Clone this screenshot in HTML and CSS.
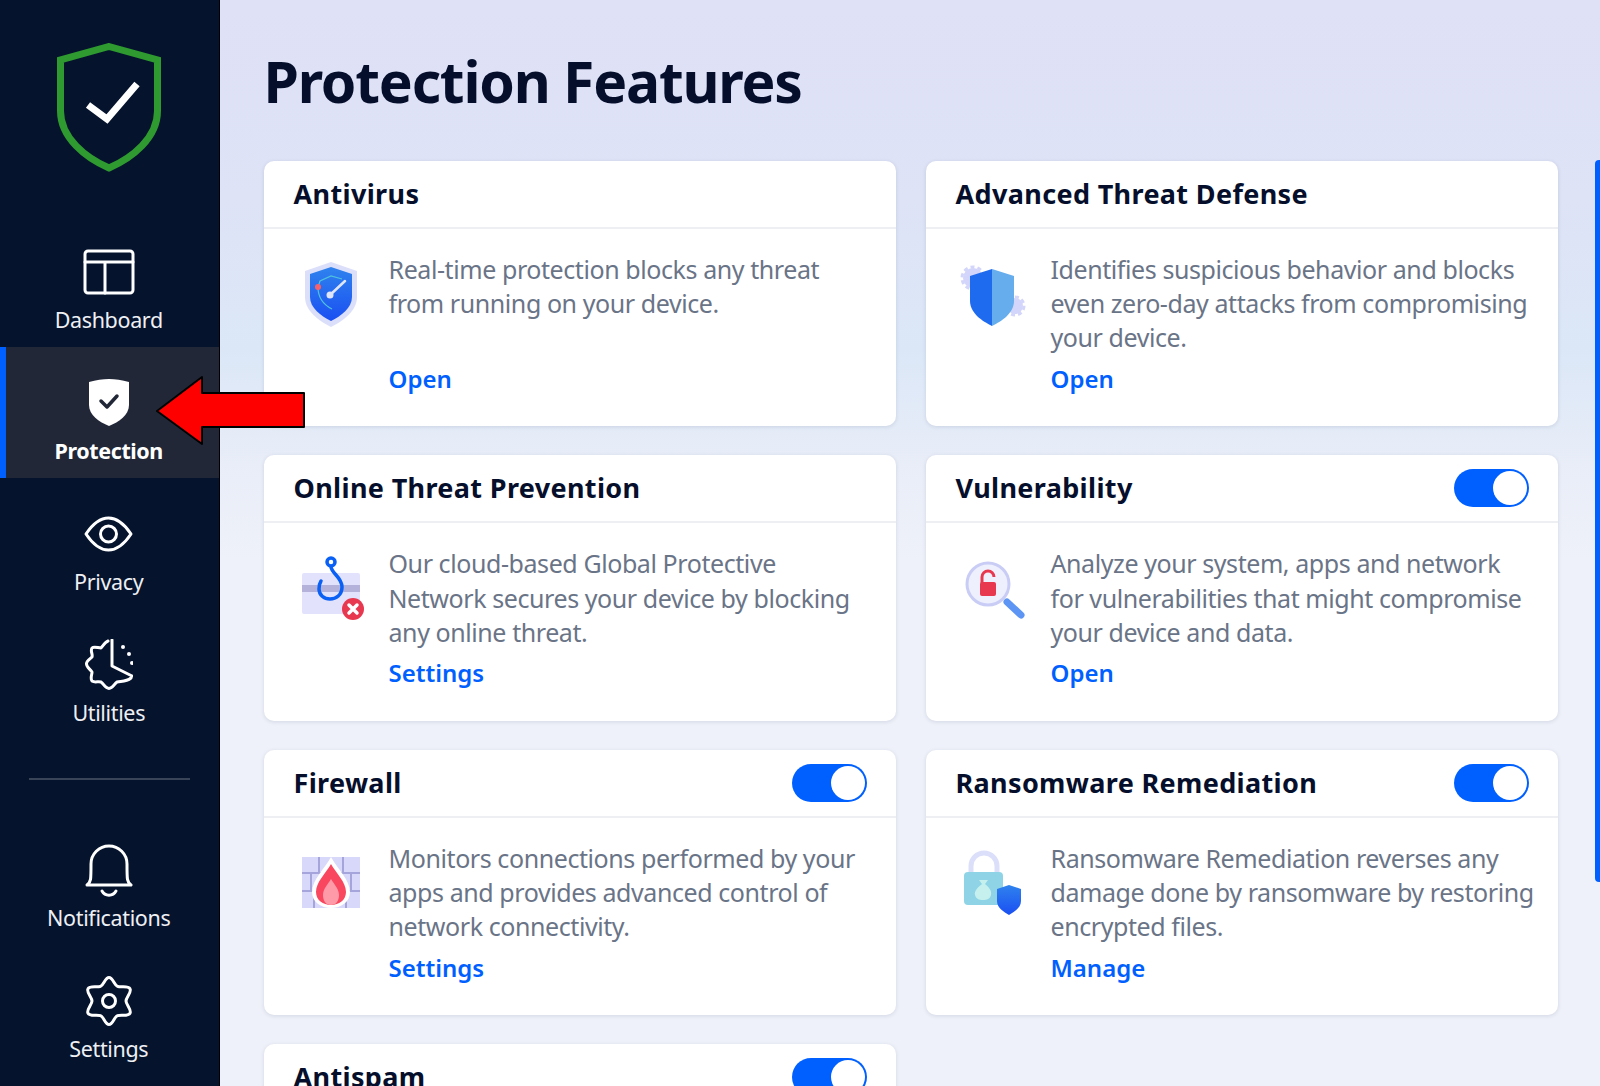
FILE: index.html
```html
<!DOCTYPE html>
<html lang="en">
<head>
<meta charset="utf-8">
<title>Protection Features</title>
<link rel="stylesheet" href="styles.css">
</head>
<body>
<div class="app">
  <aside class="sidebar">
    <div class="logo">
      <svg class="logo-icon" viewBox="0 0 104 129"><path class="logo-shield" d="M52 3.5 100.5 17V68C100.5 95 75 115 52 125 29 115 3.500 95 3.500 68V17Z"/><path class="logo-check" d="M31 62 50 76 80 41"/></svg>
    </div>
    <nav class="nav">
      <a class="nav-item"><span class="nav-icon"><svg class="i-dash" viewBox="0 0 52 46"><rect x="2" y="2" width="48" height="42" rx="3"/><path d="M2 13H50M22 13V44"/></svg></span><span class="nav-label">Dashboard</span></a>
      <a class="nav-item active"><span class="nav-icon"><svg class="i-prot" viewBox="0 0 40 47"><path class="solid" d="M20 0C26 0 33 1 40 3V26C40 36 30 43 20 47 10 43 0 36 0 26V3C7 1 14 0 20 0Z"/><path class="tick" d="M12 22 18 28 28 17"/></svg></span><span class="nav-label">Protection</span></a>
      <a class="nav-item"><span class="nav-icon"><svg class="i-eye" viewBox="0 0 49 36"><path d="M2 18C10 6 18 2 24.500 2S39 6 47 18C39 30 31 34 24.500 34S10 30 2 18Z"/><circle cx="24.500" cy="18" r="8"/></svg></span><span class="nav-label">Privacy</span></a>
      <a class="nav-item"><span class="nav-icon"><svg class="i-util" viewBox="0 0 48 51"><path d="M23 2C20 3 18 7 16 9 13 9 9 7 7 9 5 12 8 15 7 18 5 20 1 22 1.500 25 1.500 28 5 30 7 33 7 36 5 39 7 42 10 44 13 42 16 43 19 45 20 49.500 24 49.500 28 49.500 29 45 32 43 36 42 41 43 46 39"/><path d="M27 1V27L47 37"/><circle class="dot" cx="38" cy="8" r="2"/><circle class="dot" cx="44" cy="15" r="2"/><circle class="dot" cx="47" cy="24" r="2"/></svg></span><span class="nav-label">Utilities</span></a>
      <div class="nav-divider"></div>
      <a class="nav-item"><span class="nav-icon"><svg class="i-bell" viewBox="0 0 48 53"><path d="M2 41C6 38 6 36 6 20A18 18 0 0 1 42 20C42 36 42 38 46 41Z"/><path d="M17 47A8 8 0 0 0 31 47"/></svg></span><span class="nav-label">Notifications</span></a>
      <a class="nav-item"><span class="nav-icon"><svg class="i-gear" viewBox="0 0 48 50"><path d="M24 1.500C28 1.500 29 9 32.500 10.300 36 11.600 43.200 9.300 45 12.750 47 16.200 41 21.300 41 25 41 28.700 47 33.800 45 37.250 43.200 40.700 36 38.400 32.500 39.700 29 41 28 48.500 24 48.500 20 48.500 19 41 15.500 39.700 12 38.400 4.800 40.700 3 37.250 1 33.800 7 28.700 7 25 7 21.300 1 16.200 3 12.750 4.800 9.300 12 11.600 15.500 10.300 19 9 20 1.500 24 1.500Z"/><circle cx="24" cy="25" r="6.500"/></svg></span><span class="nav-label">Settings</span></a>
    </nav>
  </aside>

  <main class="main">
    <h1 class="page-title">Protection Features</h1>
    <div class="grid">

      <section class="card">
        <header class="card-head"><h2>Antivirus</h2></header>
        <div class="card-body">
          <svg class="feature" viewBox="0 0 64 72"><defs><linearGradient id="blue" x1="0" y1="0" x2="0" y2="1"><stop offset="0" stop-color="#2f82ee"/><stop offset="1" stop-color="#1a4ff2"/></linearGradient></defs><path fill="#dcdffa" d="M30 3 56 12V38C56 52 42 62 30 68 18 62 4 52 4 38V12Z"/><path fill="url(#blue)" d="M30 8 51 15V38C51 49 40 57 30 62 20 57 9 49 9 38V15Z"/><path fill="none" stroke="#4fc2dc" stroke-width="1.200" d="M41 20 30 17 19 22 17 28C17 38 21 45 31 50"/><path stroke="#dfe6fb" stroke-width="2.500" stroke-linecap="round" d="M29 36 44 22"/><circle cx="29" cy="36" r="3.500" fill="#dfe6fb"/><circle cx="17" cy="28" r="3" fill="#f7616b"/></svg>
          <div class="card-text"><p>Real-time protection blocks any threat<br>from running on your device.</p><a class="card-link">Open</a></div>
        </div>
      </section>

      <section class="card">
        <header class="card-head"><h2>Advanced Threat Defense</h2></header>
        <div class="card-body">
          <svg class="feature" viewBox="0 0 64 72"><circle cx="10" cy="19" r="10" fill="#d3d5fa"/><circle cx="10" cy="19" r="11" fill="none" stroke="#d3d5fa" stroke-width="3" stroke-dasharray="4 3"/><circle cx="52" cy="47" r="8" fill="#d3d5fa"/><circle cx="52" cy="47" r="9" fill="none" stroke="#d3d5fa" stroke-width="3" stroke-dasharray="4 3"/><path fill="#1f6bf0" d="M29 10 7 17V42C7 54 19 62 29 67Z"/><path fill="#66adee" d="M29 10 51 17V42C51 54 39 62 29 67Z"/></svg>
          <div class="card-text"><p>Identifies suspicious behavior and blocks<br>even zero-day attacks from compromising<br>your device.</p><a class="card-link">Open</a></div>
        </div>
      </section>

      <section class="card">
        <header class="card-head"><h2>Online Threat Prevention</h2></header>
        <div class="card-body">
          <svg class="feature" viewBox="0 0 64 72"><rect x="1" y="20" width="58" height="41" rx="2" fill="#e2e2fc"/><rect x="1" y="32" width="58" height="7" fill="#b4b1da"/><circle cx="30" cy="9" r="4" fill="none" stroke="#0a60f5" stroke-width="3.500"/><path fill="none" stroke="#0a60f5" stroke-width="3.500" stroke-linecap="round" d="M30 13.500C30 20 41 24 41 34 41 42 35 46 29 46 23 46 18 42 18 36 18 33 18 31 20 28"/><circle cx="52" cy="56" r="11" fill="#e8384f"/><path stroke="#fff" stroke-width="3.500" stroke-linecap="round" d="M48 52 56 60M56 52 48 60"/></svg>
          <div class="card-text"><p>Our cloud-based Global Protective<br>Network secures your device by blocking<br>any online threat.</p><a class="card-link">Settings</a></div>
        </div>
      </section>

      <section class="card">
        <header class="card-head"><h2>Vulnerability</h2><span class="toggle"></span></header>
        <div class="card-body">
          <svg class="feature" viewBox="0 0 64 72"><path stroke="#5d95f5" stroke-width="7" stroke-linecap="round" d="M44 49 58 62"/><circle cx="25" cy="31" r="21" fill="#eef0fd" stroke="#c9cdf5" stroke-width="3"/><path fill="none" stroke="#e8384f" stroke-width="3" d="M19 30V24A6 6 0 0 1 31 24"/><rect x="17" y="29" width="16" height="14" rx="2" fill="#e8384f"/></svg>
          <div class="card-text"><p>Analyze your system, apps and network<br>for vulnerabilities that might compromise<br>your device and data.</p><a class="card-link">Open</a></div>
        </div>
      </section>

      <section class="card">
        <header class="card-head"><h2>Firewall</h2><span class="toggle"></span></header>
        <div class="card-body">
          <svg class="feature" viewBox="0 0 64 72"><rect x="1" y="9" width="58" height="51" fill="#d7d8fa"/><path fill="none" stroke="#a5a5dc" stroke-width="2" d="M1 25H59M1 43H59M18 9V25M42 9V25M10 25V43M32 25V43M50 25V43M13 43V60M45 43V60"/><path fill="#fff" d="M30 9C36 20 49 32 49 44 49 54 40 60 30 60 20 60 11 54 11 44 11 32 24 20 30 9Z"/><path fill="#f9475f" d="M30 16C35 25 45 34 45 44 45 52 38 57 30 57 22 57 15 52 15 44 15 34 25 25 30 16Z"/><path fill="#ff9aa8" d="M30 31C33 36 38 41 38 47 38 53 35 57 30 57 25 57 22 53 22 47 22 41 27 36 30 31Z"/></svg>
          <div class="card-text"><p>Monitors connections performed by your<br>apps and provides advanced control of<br>network connectivity.</p><a class="card-link">Settings</a></div>
        </div>
      </section>

      <section class="card">
        <header class="card-head"><h2>Ransomware Remediation</h2><span class="toggle"></span></header>
        <div class="card-body">
          <svg class="feature" viewBox="0 0 64 72"><path fill="none" stroke="#dcdffa" stroke-width="5" d="M8 28V18A13 13 0 0 1 34 18V28"/><rect x="1" y="24" width="39" height="33" rx="4" fill="#8ed4e6"/><path fill="#c6f0ee" d="M16 32H25L22 36C26 39 29 43 28 47 27 51 24 52 20 52 16 52 13 51 12 47 11 43 15 39 19 36Z"/><path fill="url(#blue)" d="M46 37 58 41V53C58 60 51 64 46 67 41 64 34 60 34 53V41Z"/></svg>
          <div class="card-text"><p>Ransomware Remediation reverses any<br>damage done by ransomware by restoring<br>encrypted files.</p><a class="card-link">Manage</a></div>
        </div>
      </section>

      <section class="card">
        <header class="card-head"><h2>Antispam</h2><span class="toggle"></span></header>
      </section>

    </div>
    <div class="scroll-thumb"></div>
  </main>
</div>
<svg class="arrow" viewBox="0 0 154 74"><path d="M7 39 52 5V21H154V55H52V72Z"/></svg>
</body>
</html>
```
FILE: styles.css
```css
* { box-sizing: border-box; }
html, body { margin: 0; height: 1086px; overflow: hidden; }
body { font-family: "Noto Sans", "Open Sans", sans-serif; background: #eef1f9; color: #050f2c; }
.app { display: flex; height: 1086px; }

.sidebar { width: 220px; flex: none; background: #05132d; border-right: 1px solid #000; color: #fff; }
.logo { height: 216px; padding: 43px 2px 0 0; display: flex; justify-content: center; align-items: flex-start; }
.logo-icon { width: 104px; height: 129px; }
.logo-shield { fill: none; stroke: #2e9a2f; stroke-width: 7; }
.logo-check { fill: none; stroke: #fff; stroke-width: 7; }

.nav { display: flex; flex-direction: column; }
.nav-item { height: 131px; padding: 27.5px 1.5px 0 0; display: flex; flex-direction: column; align-items: center; color: #eef0f4; }
.nav-item.active { background: #212737; box-shadow: inset 6px 0 0 #0060ff; color: #fff; }
.nav-item.active .nav-label { font-weight: 700; letter-spacing: -0.4px; }
.nav-icon { height: 56px; display: flex; align-items: center; justify-content: center; }
.nav-icon svg { display: block; fill: none; stroke: #fff; stroke-width: 3; stroke-linecap: round; stroke-linejoin: round; }
.nav-label { font-size: 21.5px; line-height: 28px; margin-top: 6px; letter-spacing: -0.35px; }
.nav-divider { height: 2px; margin: 37.5px 29px 35px; background: #3a4458; }

.i-dash { width: 52px; height: 46px; }
.i-prot { width: 40px; height: 47px; }
.i-eye { width: 49px; height: 36px; }
.i-util { width: 48px; height: 51px; }
.i-bell { width: 48px; height: 53px; }
.i-gear { width: 48px; height: 50px; }
.nav-icon .solid { fill: #fff; stroke: none; }
.nav-icon .tick { stroke: #212737; stroke-width: 3.5; }
.nav-icon .dot { fill: #fff; stroke: none; }

.main { flex: 1; position: relative; padding-left: 43.5px; background: linear-gradient(180deg, #dfe1f7 0, #dee3f6 200px, #dbe7f7 350px, #eaeef8 480px, #eef1f9 560px); overflow: hidden; }
.page-title { margin: 0; height: 160.5px; padding-top: 41px; font-size: 57px; line-height: 80px; font-weight: 700; letter-spacing: -1.2px; color: #050f2c; }

.grid { display: grid; grid-template-columns: 632.5px 632.5px; grid-template-rows: 265.6px 265.4px 265.4px 265.4px; column-gap: 29.5px; row-gap: 29.2px; }
.card { background: #fff; border-radius: 10px; box-shadow: 0 1px 4px rgba(20, 30, 70, .12); }
.card-head { height: 68px; padding: 0 29px 0 30px; display: flex; align-items: center; justify-content: space-between; border-bottom: 2px solid #eeeff2; }
.card-head h2 { margin: 0; font-size: 27px; line-height: 36px; font-weight: 700; color: #050f2c; letter-spacing: 0.35px; }
.toggle { position: relative; width: 75px; height: 38px; border-radius: 20px; background: #0060ff; }
.toggle::after { content: ""; position: absolute; right: 2px; top: 2px; width: 34px; height: 34px; border-radius: 50%; background: #fff; }

.card-body { display: flex; padding: 23px 12px 0 37px; }
.feature { width: 64px; height: 72px; flex: none; margin-top: 7px; margin-right: 24px; overflow: visible; }
.card-text { flex: 1; min-width: 0; }
.card-text p { margin: 0; height: 103px; font-size: 25px; line-height: 34.3px; color: #6a7487; letter-spacing: -0.42px; white-space: nowrap; }
.card-link { display: block; margin-top: 7px; font-size: 24px; line-height: 34px; font-weight: 600; color: #0060ff; }

.scroll-thumb { position: absolute; right: 0; top: 160px; width: 5px; height: 722px; background: #0060ff; border-radius: 4px 0 0 4px; }
.arrow { position: absolute; left: 150px; top: 372px; width: 154px; height: 74px; fill: #f00; stroke: #000; stroke-width: 2; stroke-linejoin: round; overflow: visible; }
```
